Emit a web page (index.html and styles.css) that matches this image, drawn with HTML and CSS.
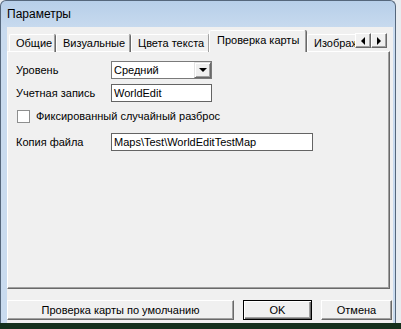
FILE: index.html
```html
<!DOCTYPE html>
<html lang="ru">
<head>
    <meta charset="UTF-8">
    <title>Параметры</title>
    <link rel="stylesheet" href="styles.css">
</head>
<body>
    <div class="window">
        <div class="titlebar">Параметры</div>

        <div class="client">
            <div class="tabstrip">
                <div class="tabs">
                    <div class="tab t-general">Общие</div>
                    <div class="tab t-visual">Визуальные</div>
                    <div class="tab t-colors">Цвета текста</div>
                    <div class="tab t-test active">Проверка карты</div>
                    <div class="tab t-images">Изображения</div>
                </div>
                <div class="scroller">
                    <span class="arrow"><i class="tri left"></i></span>
                    <span class="arrow"><i class="tri right"></i></span>
                </div>
            </div>

            <div class="panel">
                <div class="row">
                    <label class="caption">Уровень</label>
                    <div class="select">
                        <span class="select-text">Средний</span>
                        <span class="drop"><i class="tri down"></i></span>
                    </div>
                </div>
                <div class="row">
                    <label class="caption">Учетная запись</label>
                    <div class="field short">WorldEdit</div>
                </div>
                <div class="row check-row">
                    <span class="checkbox"></span>
                    <label>Фиксированный случайный разброс</label>
                </div>
                <div class="row">
                    <label class="caption">Копия файла</label>
                    <div class="field long">Maps\Test\WorldEditTestMap</div>
                </div>
            </div>

            <div class="buttons">
                <button class="btn wide">Проверка карты по умолчанию</button>
                <button class="btn default">OK</button>
                <button class="btn cancel">Отмена</button>
            </div>
        </div>
    </div>
</body>
</html>
```

FILE: styles.css
```css
body {
    margin: 0;
    width: 401px;
    height: 329px;
    overflow: hidden;
    font-family: 'Liberation Sans', Arial, sans-serif;
    font-size: 11px;
    color: #000;
    background: linear-gradient(to bottom, #e8ecf0 0, #e8ecf0 323px, #14301c 323px);
}

.window {
    width: 394px;
    height: 322px;
    border: 1px solid #55677c;
    border-bottom: none;
    border-radius: 6px 6px 0 0;
    background: linear-gradient(to bottom, #b7cfe9 0, #c9dbef 30px, #c9dbef 100%);
    display: flex;
    flex-direction: column;
}

.titlebar {
    height: 26px;
    line-height: 26px;
    padding-left: 6px;
    font-size: 12px;
}

.client {
    margin: 0 2px 0 6px;
    flex: 1;
    background: #f0f0f0;
    padding: 3px 0 0 0;
    display: flex;
    flex-direction: column;
}

/* tabs */
.tabstrip {
    display: flex;
    align-items: flex-end;
    height: 22px;
    padding-left: 2px;
    position: relative;
    z-index: 1;
}

.tabs {
    display: flex;
    align-items: flex-end;
    width: 346px;
    height: 22px;
    overflow: hidden;
}

.tab {
    flex: none;
    box-sizing: border-box;
    height: 18px;
    line-height: 17px;
    padding-left: 6px;
    white-space: nowrap;
    border: 1px solid #fff;
    border-right-color: #a0a0a0;
    border-bottom: none;
    box-shadow: 1px 0 0 #696969;
    border-radius: 2px 2px 0 0;
    margin-right: 1px;
}

.t-general { width: 46px; }
.t-visual { width: 74px; }
.t-colors { width: 78px; }
.t-images { width: 70px; }

.tab.active {
    width: 97px;
    height: 22px;
    line-height: 19px;
    padding-left: 7px;
    margin: 0 1px 0 -1px;
    background: #f0f0f0;
    position: relative;
    z-index: 2;
}

.scroller {
    display: flex;
    margin-bottom: 4px;
}

.arrow {
    width: 16px;
    height: 15px;
    display: flex;
    align-items: center;
    justify-content: center;
    border: 1px solid;
    border-color: #fff #696969 #696969 #fff;
    box-shadow: inset -1px -1px 0 #a0a0a0;
    box-sizing: border-box;
    background: #f0f0f0;
}

.tri {
    width: 0;
    height: 0;
    border-style: solid;
    border-color: transparent;
}

.tri.left {
    border-width: 4px 4px 4px 0;
    border-right-color: #000;
}

.tri.right {
    border-width: 4px 0 4px 4px;
    border-left-color: #000;
}

.tri.down {
    border-width: 4px 4px 0 4px;
    border-top-color: #000;
}

/* page */
.panel {
    height: 227px;
    margin: -1px 3px 0 0;
    border: 1px solid;
    border-color: #fff #696969 #696969 #fff;
    box-shadow: inset -1px -1px 0 #a0a0a0;
    padding: 9px 0 0 8px;
}

.row {
    display: flex;
    align-items: center;
    height: 18px;
    margin-bottom: 5px;
}

.caption {
    width: 95px;
}

.select {
    width: 101px;
    height: 18px;
    box-sizing: border-box;
    border: 1px solid #7a7a7a;
    background: #fff;
    display: flex;
    align-items: center;
    justify-content: space-between;
    padding-left: 2px;
}

.drop {
    width: 17px;
    height: 16px;
    display: flex;
    align-items: center;
    justify-content: center;
    border: 1px solid;
    border-color: #e3e3e3 #696969 #696969 #e3e3e3;
    box-shadow: inset 1px 1px 0 #fff, inset -1px -1px 0 #a0a0a0;
    box-sizing: border-box;
    background: #f0f0f0;
}

.field {
    height: 18px;
    line-height: 16px;
    box-sizing: border-box;
    border: 1px solid #646464;
    background: #fff;
    padding-left: 2px;
}

.short { width: 101px; }
.long { width: 202px; }

.check-row {
    margin: 2px 0 8px 1px;
}

.checkbox {
    width: 13px;
    height: 13px;
    box-sizing: border-box;
    border: 1px solid #8e8f8f;
    background: #fff;
    margin-right: 6px;
}

/* bottom buttons */
.buttons {
    display: flex;
    gap: 9px;
    padding-top: 11px;
}

.btn {
    height: 20px;
    font-family: inherit;
    font-size: 11px;
    color: #000;
    background: #f0f0f0;
    border: 1px solid;
    border-color: #fff #696969 #696969 #fff;
    box-shadow: inset -1px -1px 0 #a0a0a0;
    padding: 0;
}

.wide { width: 227px; }
.default {
    width: 69px;
    border-color: #000;
    box-shadow: inset 1px 1px 0 #fff, inset -1px -1px 0 #696969, inset -2px -2px 0 #a0a0a0;
}
.cancel { width: 71px; }
```
